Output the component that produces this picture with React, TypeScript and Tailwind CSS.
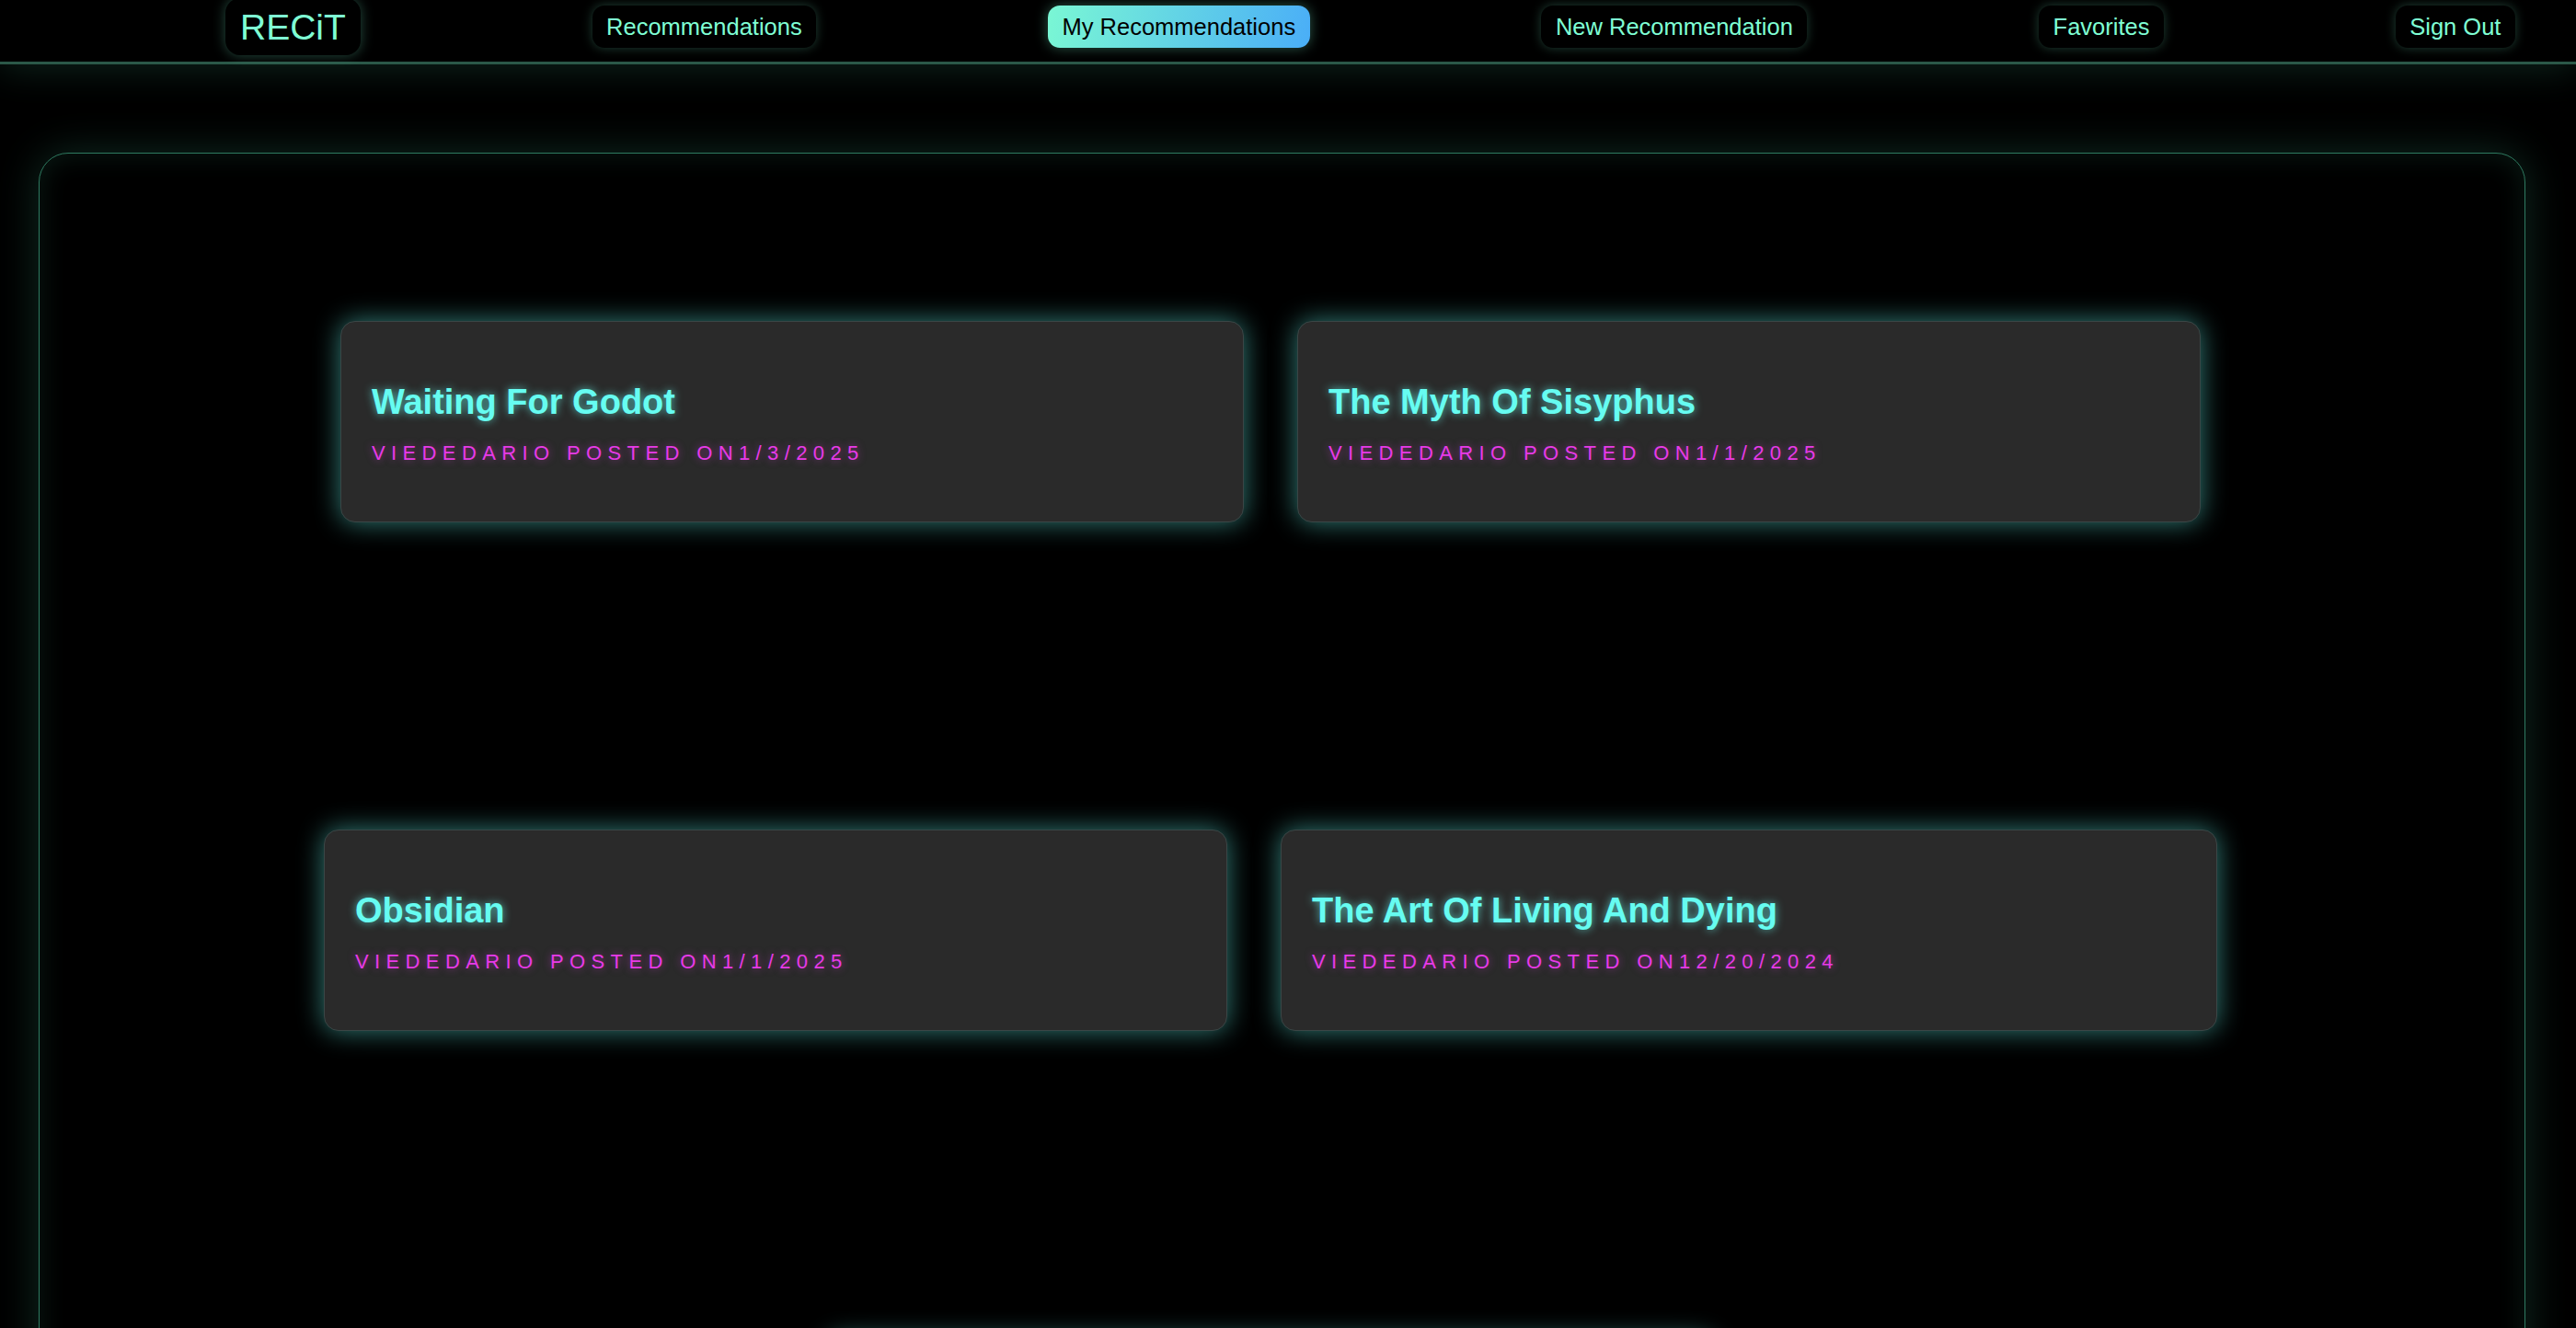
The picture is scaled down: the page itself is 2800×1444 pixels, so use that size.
const navLinks = [
  { label: "Recommendations", active: false },
  { label: "My Recommendations", active: true },
  { label: "New Recommendation", active: false },
  { label: "Favorites", active: false },
  { label: "Sign Out", active: false },
];

type Rec = { title: string; date: string; width: string };

const rows: Rec[][] = [
  [
    { title: "Waiting For Godot", date: "1/3/2025", width: "w-[982px]" },
    { title: "The Myth Of Sisyphus", date: "1/1/2025", width: "w-[982px]" },
  ],
  [
    { title: "Obsidian", date: "1/1/2025", width: "w-[982px]" },
    { title: "The Art Of Living And Dying", date: "12/20/2024", width: "w-[1018px]" },
  ],
];

function NavBar() {
  return (
    <nav className="flex h-[70px] items-center justify-between border-b-[3px] border-[#2b5848] bg-black pb-[9px] pl-[245px] pr-[66px] shadow-[0_4px_40px_rgba(46,122,96,0.3)]">
      <div className="flex h-[62px] items-center rounded-[16px] bg-black px-[16px] text-[39px] leading-none text-[#7fffd4] shadow-[0_0_14px_rgba(127,255,212,0.3)]">
        RECiT
      </div>
      {navLinks.map((link) =>
        link.active ? (
          <a
            key={link.label}
            className="flex h-[46px] items-center rounded-[13px] bg-[linear-gradient(100deg,#7af7d4,#4aaef7)] px-[15.5px] text-[25.5px] text-black shadow-[0_0_14px_rgba(127,255,212,0.35)]"
          >
            {link.label}
          </a>
        ) : (
          <a
            key={link.label}
            className="flex h-[46px] items-center rounded-[13px] bg-black px-[15.5px] text-[25.5px] text-[#7fffd4] shadow-[0_0_12px_rgba(127,255,212,0.25)]"
          >
            {link.label}
          </a>
        )
      )}
    </nav>
  );
}

function RecCard({ rec }: { rec: Rec }) {
  return (
    <div
      className={`${rec.width} flex h-[219px] flex-col justify-center gap-[20px] rounded-[16px] border border-[#3a4646] bg-[#2a2a2a] px-[33px] pt-[4px] shadow-[0_0_28px_rgba(102,252,241,0.5)]`}
    >
      <h2 className="text-[38px] font-bold leading-[1.15] text-[#66fcf1] [text-shadow:0_0_10px_rgba(102,252,241,0.7)]">
        {rec.title}
      </h2>
      <p className="text-[22px] uppercase leading-[1.15] tracking-[0.29em] text-[#e83ae8] [text-shadow:0_0_8px_rgba(232,58,232,0.55)]">
        viededario posted on{rec.date}
      </p>
    </div>
  );
}

export default function App() {
  return (
    <div className="min-h-screen overflow-hidden bg-black font-['Liberation_Sans',Arial,sans-serif]">
      <NavBar />
      <main className="pt-[96px] pb-[60px]">
        <section className="ml-[42px] flex w-[2703px] flex-col items-center gap-[334px] rounded-[32px] border border-[#2e7a60] bg-black pb-[200px] pr-[25px] pt-[182px] shadow-[0_0_45px_rgba(46,122,96,0.35),inset_0_0_30px_rgba(46,122,96,0.22)]">
          {rows.map((row, i) => (
            <div key={i} className="flex gap-[58px]">
              {row.map((rec) => (
                <RecCard key={rec.title} rec={rec} />
              ))}
            </div>
          ))}
          <div className="h-[120px] w-[965px] rounded-[16px] border border-[#3a4646] bg-[#2a2a2a] shadow-[0_0_28px_rgba(102,252,241,0.5)]" />
        </section>
      </main>
    </div>
  );
}
